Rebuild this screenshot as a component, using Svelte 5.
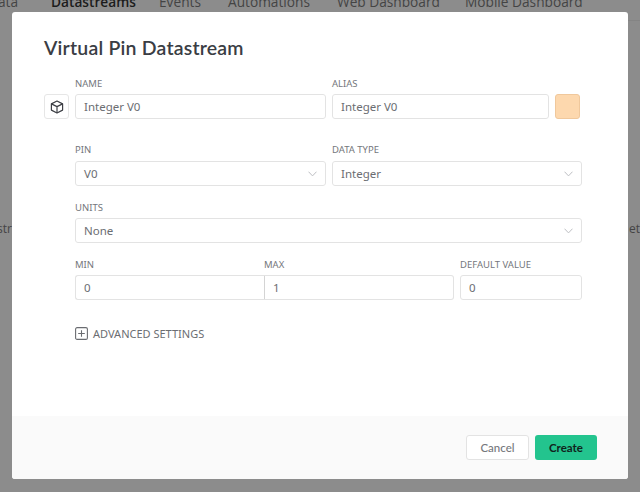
<script>
  const tabs = [
    { label: 'Data', cls: 'tab t1' },
    { label: 'Datastreams', cls: 'tab t2 active' },
    { label: 'Events', cls: 'tab t3' },
    { label: 'Automations', cls: 'tab t4' },
    { label: 'Web Dashboard', cls: 'tab t5' },
    { label: 'Mobile Dashboard', cls: 'tab t6' }
  ];
</script>

<div class="page">
  <div class="behind" aria-hidden="true">
    {#each tabs as t}<span class={t.cls}>{t.label}</span>{/each}
    <span class="edge left">Datastr</span>
    <span class="edge right">et</span>
    <div class="tabline"></div>
  </div>

  <div class="modal">
    <div class="body">
      <h1>Virtual Pin Datastream</h1>

      <div class="row first">
        <button class="iconbox" aria-label="Icon">
          <svg width="14" height="14" viewBox="0 0 14 14" fill="none" stroke="#3d3f45" stroke-width="1.2" stroke-linejoin="round">
            <path d="M7 1 12.6 3.9V10.1L7 13 1.4 10.1V3.9Z" />
            <path d="M1.4 3.9 7 6.6 12.6 3.9M7 6.6V13" />
          </svg>
        </button>
        <div class="field name">
          <span class="lbl">NAME</span>
          <div class="ctl">Integer V0</div>
        </div>
        <div class="field alias">
          <span class="lbl">ALIAS</span>
          <div class="ctl">Integer V0</div>
        </div>
        <div class="swatch"></div>
      </div>

      <div class="form">
        <div class="row two">
          <div class="field name">
            <span class="lbl">PIN</span>
            <div class="ctl sel">V0
              <svg class="chev" width="9" height="6" viewBox="0 0 9 6" fill="none"><path d="M.5.7 4.500 4.900 8.500.7" /></svg>
            </div>
          </div>
          <div class="field grow">
            <span class="lbl">DATA TYPE</span>
            <div class="ctl sel">Integer
              <svg class="chev" width="9" height="6" viewBox="0 0 9 6" fill="none"><path d="M.5.7 4.500 4.900 8.500.7" /></svg>
            </div>
          </div>
        </div>

        <div class="field units">
          <span class="lbl">UNITS</span>
          <div class="ctl sel">None
            <svg class="chev" width="9" height="6" viewBox="0 0 9 6" fill="none"><path d="M.5.7 4.500 4.900 8.500.7" /></svg>
          </div>
        </div>

        <div class="row three">
          <div class="field min">
            <span class="lbl">MIN</span>
            <div class="ctl joinl">0</div>
          </div>
          <div class="field max">
            <span class="lbl">MAX</span>
            <div class="ctl joinr">1</div>
          </div>
          <div class="field grow">
            <span class="lbl">DEFAULT VALUE</span>
            <div class="ctl">0</div>
          </div>
        </div>

        <div class="advanced">
          <svg width="13" height="13" viewBox="0 0 13 13" fill="none" stroke="#6a6c71" stroke-width="1.1">
            <rect x=".6" y=".6" width="11.800" height="11.800" rx="1.500" />
            <path d="M6.500 3.200V9.800M3.200 6.500H9.800" />
          </svg>
          <span>ADVANCED SETTINGS</span>
        </div>
      </div>
    </div>

    <div class="footer">
      <button class="btn cancel">Cancel</button>
      <button class="btn create">Create</button>
    </div>
  </div>
</div>

<style>
  :global(body) {
    margin: 0;
  }
  .page {
    position: relative;
    width: 640px;
    height: 492px;
    background: #8c8c8c;
    overflow: hidden;
    box-sizing: border-box;
    padding: 12px 12px 13px;
    font-family: "Noto Sans", "Open Sans", sans-serif;
  }
  .behind {
    position: absolute;
    inset: 0;
    color: #3e3e3e;
    font-family: "Open Sans", "Noto Sans", sans-serif;
    font-size: 13.700px;
  }
  .tab {
    position: absolute;
    top: -7px;
    line-height: 18px;
    white-space: nowrap;
    color: #444;
  }
  .t1 { left: -12px; }
  .t2 { left: 51px; color: #1c1c1c; font-weight: 600; }
  .t3 { left: 159px; }
  .t4 { left: 228px; }
  .t5 { left: 337px; }
  .t6 { left: 465px; }
  .tabline {
    position: absolute;
    top: 20px;
    left: 628px;
    right: 0;
    height: 1px;
    background: #848484;
  }
  .edge {
    position: absolute;
    top: 221px;
    font-size: 12px;
    line-height: 16px;
    color: #444;
  }
  .edge.left { right: 628px; }
  .edge.right { left: 629px; }

  .modal {
    position: relative;
    height: 467px;
    background: #fff;
    border-radius: 3px;
    display: flex;
    flex-direction: column;
    overflow: hidden;
  }
  .body {
    flex: 1;
    padding: 24px 31px 0 32px;
  }
  h1 {
    margin: 0 0 18px;
    font-family: "Lato", "Open Sans", sans-serif;
    font-size: 19.500px;
    line-height: 23px;
    font-weight: 600;
    color: #3a3d44;
    letter-spacing: .2px;
  }
  .row {
    display: flex;
    gap: 6px;
    align-items: flex-end;
  }
  .iconbox {
    width: 25px;
    height: 25px;
    padding: 0;
    box-sizing: border-box;
    background: #fff;
    border: 1px solid #e6e6e6;
    border-radius: 3px;
    display: flex;
    align-items: center;
    justify-content: center;
  }
  .field {
    display: flex;
    flex-direction: column;
    min-width: 0;
  }
  .lbl {
    font-size: 9.500px;
    line-height: 13px;
    height: 13px;
    margin-bottom: 4px;
    color: #75777c;
    white-space: nowrap;
  }
  .two .lbl {
    margin-bottom: 5px;
  }
  .ctl {
    position: relative;
    height: 25px;
    box-sizing: border-box;
    border: 1px solid #e3e3e3;
    border-radius: 3px;
    background: #fff;
    padding: 0 8px;
    font-size: 11.500px;
    line-height: 23px;
    color: #6b6d72;
  }
  .chev {
    position: absolute;
    right: 8px;
    top: 9px;
  }
  .chev path {
    stroke: #bdbfc3;
    stroke-width: 1;
  }
  .name { width: 251px; }
  .alias { width: 217px; }
  .swatch {
    width: 25px;
    height: 25px;
    box-sizing: border-box;
    background: #fdd8ae;
    border: 1px solid #f0c89c;
    border-radius: 3px;
  }
  .form {
    margin: 0 15px 0 31px;
  }
  .two { margin-top: 24px; }
  .grow { flex: 1; }
  .units { margin-top: 15px; }
  .three {
    margin-top: 15px;
    gap: 0;
  }
  .min { width: 189px; }
  .max { width: 190px; margin-right: 6px; }
  .joinl {
    border-radius: 3px 0 0 3px;
    border-right: 0;
  }
  .joinr {
    border-radius: 0 3px 3px 0;
    border-left: 1px solid #d4d4d4;
  }
  .advanced {
    margin-top: 26px;
    display: flex;
    align-items: center;
    gap: 5px;
    height: 14px;
    font-size: 11px;
    color: #6b6d72;
    white-space: nowrap;
  }
  .footer {
    height: 63px;
    flex: none;
    box-sizing: border-box;
    background: #fafafa;
    display: flex;
    justify-content: flex-end;
    gap: 6px;
    padding: 19px 31px 0 0;
  }
  .btn {
    height: 25px;
    border-radius: 3px;
    font-family: "Lato", "Open Sans", sans-serif;
    font-size: 11.500px;
    padding: 0;
    box-sizing: border-box;
  }
  .cancel {
    width: 63px;
    background: #fff;
    border: 1px solid #e3e3e3;
    color: #75777c;
    font-weight: 500;
  }
  .create {
    width: 62px;
    background: #23c48e;
    border: 0;
    color: #10231c;
    font-weight: 700;
  }
</style>
